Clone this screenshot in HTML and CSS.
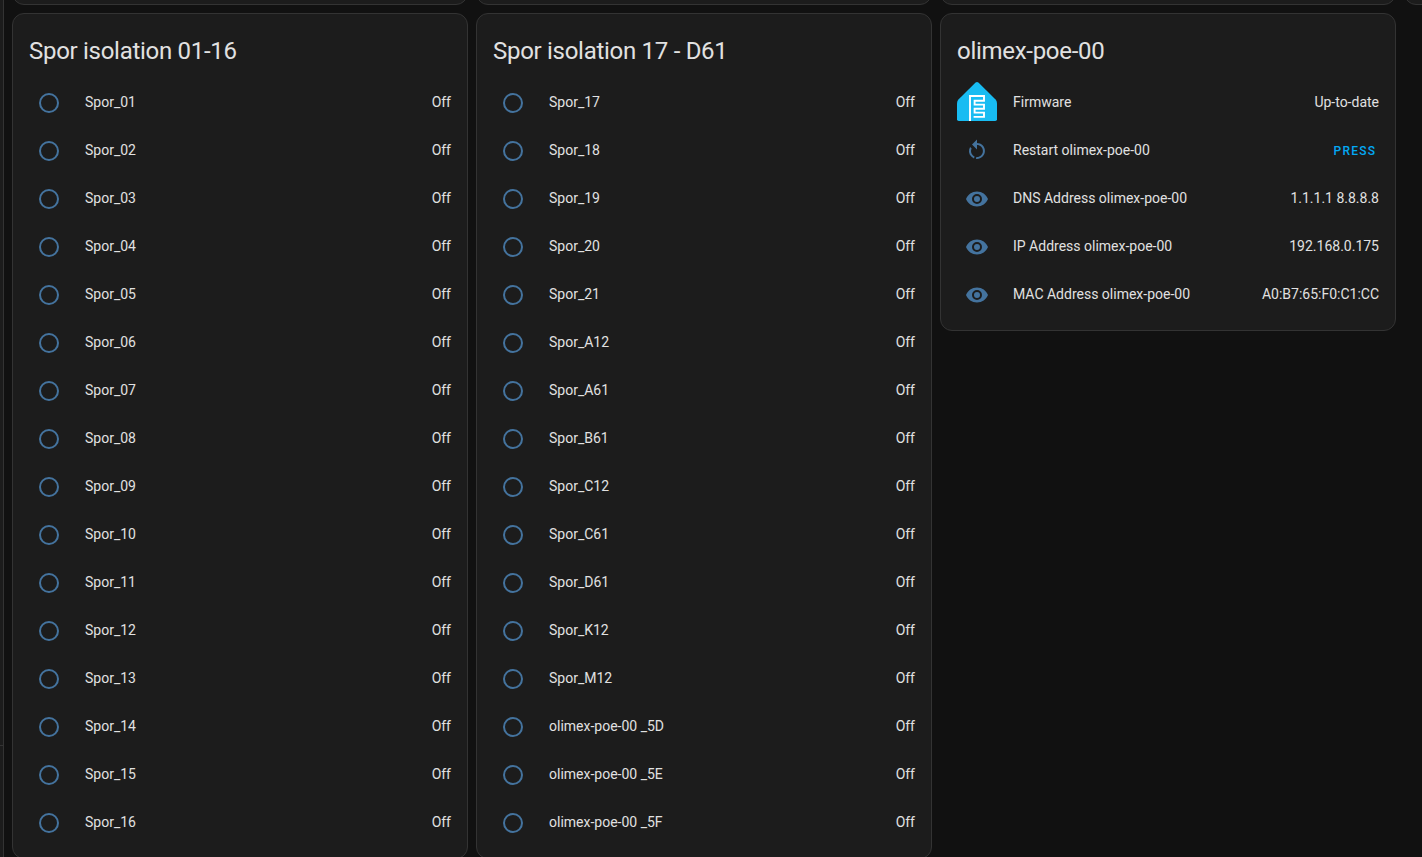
FILE: index.html
```
<!DOCTYPE html>
<html lang="en">
<head>
<meta charset="utf-8">
<title>Overview</title>
<link rel="stylesheet" href="styles.css">
</head>
<body>
<svg class="defs" aria-hidden="true">
  <symbol id="radio" viewBox="0 0 24 24"><path d="M12,20A8,8 0 0,1 4,12A8,8 0 0,1 12,4A8,8 0 0,1 20,12A8,8 0 0,1 12,20M12,2A10,10 0 0,0 2,12A10,10 0 0,0 12,22A10,10 0 0,0 22,12A10,10 0 0,0 12,2Z"/></symbol>
  <symbol id="eye" viewBox="0 0 24 24"><path d="M12,9A3,3 0 0,0 9,12A3,3 0 0,0 12,15A3,3 0 0,0 15,12A3,3 0 0,0 12,9M12,17A5,5 0 0,1 7,12A5,5 0 0,1 12,7A5,5 0 0,1 17,12A5,5 0 0,1 12,17M12,4.5C7,4.5 2.73,7.61 1,12C2.73,16.39 7,19.5 12,19.5C17,19.5 21.27,16.39 23,12C21.27,7.61 17,4.5 12,4.5Z"/></symbol>
  <symbol id="restart" viewBox="0 0 24 24"><path d="M12,4C14.1,4 16.1,4.8 17.6,6.3C20.7,9.4 20.7,14.5 17.6,17.6C15.8,19.5 13.3,20.2 10.9,19.9L11.4,17.9C13.1,18.1 14.9,17.5 16.2,16.2C18.5,13.9 18.5,10.1 16.2,7.7C15.1,6.6 13.5,6 12,6V10.6L7,5.6L12,0.6V4M6.3,17.6C3.7,15 3.3,11 5.1,7.9L6.6,9.4C5.5,11.6 5.9,14.4 7.8,16.2C8.3,16.7 8.9,17.1 9.6,17.4L9,19.4C8,19 7.1,18.4 6.3,17.6Z"/></symbol>
</svg>
<div class="app">
  <aside class="sidebar"><div class="sidebar-main"></div><div class="sidebar-foot"></div></aside>
  <main class="view">
    <div class="column">
      <section class="card card-prev"></section>
      <section class="card">
        <h1 class="title">Spor isolation 01-16</h1>
        <div class="rows" id="rows-a"></div>
      </section>
    </div>
    <div class="column">
      <section class="card card-prev"></section>
      <section class="card">
        <h1 class="title">Spor isolation 17 - D61</h1>
        <div class="rows" id="rows-b"></div>
      </section>
    </div>
    <div class="column">
      <section class="card card-prev"></section>
      <section class="card">
        <h1 class="title">olimex-poe-00</h1>
        <div class="rows">
          <div class="row">
            <span class="badge"><svg class="logo" viewBox="0 0 40 40"><path fill="#18bcf2" d="M18.6 .6Q20-.6 21.4 .6L38.3 17.3Q40 19 40 21.3V37.2Q40 39 38.2 39H1.8Q0 39 0 37.2V21.3Q0 19 1.7 17.3Z"/><path fill="none" stroke="#fff" stroke-width="1.9" d="M13 39V14H27V18.7H17.6V22.6H27V26.8H17.6V30.6H27V34.9H16.6"/></svg></span>
            <span class="name">Firmware</span><span class="state">Up-to-date</span>
          </div>
          <div class="row"><span class="badge"><svg class="icon"><use href="#restart"/></svg></span><span class="name">Restart olimex-poe-00</span><button class="press">PRESS</button></div>
          <div class="row"><span class="badge"><svg class="icon"><use href="#eye"/></svg></span><span class="name">DNS Address olimex-poe-00</span><span class="state">1.1.1.1 8.8.8.8</span></div>
          <div class="row"><span class="badge"><svg class="icon"><use href="#eye"/></svg></span><span class="name">IP Address olimex-poe-00</span><span class="state">192.168.0.175</span></div>
          <div class="row"><span class="badge"><svg class="icon"><use href="#eye"/></svg></span><span class="name">MAC Address olimex-poe-00</span><span class="state">A0:B7:65:F0:C1:CC</span></div>
        </div>
      </section>
    </div>
    <div class="column">
      <section class="card card-prev"></section>
    </div>
  </main>
</div>
<script src="app.js"></script>
</body>
</html>
```
FILE: styles.css
```
* { box-sizing: border-box; }
body {
  margin: 0;
  height: 857px;
  overflow: hidden;
  background: #111111;
  color: #e1e1e1;
  font: 14px/20px Roboto, sans-serif;
}
.defs { display: none; }
.app { display: flex; height: 857px; overflow: hidden; }
.sidebar {
  flex: none;
  display: flex;
  flex-direction: column;
  width: 4px;
  background: #1c1c1c;
  border-right: 1px solid #333333;
}
.sidebar-main { height: 745px; }
.sidebar-foot { flex: 1; border-top: 1px solid #333333; }
.view {
  flex: none;
  display: flex;
  align-items: flex-start;
  gap: 8px;
  padding-left: 8px;
}
.column {
  display: flex;
  flex-direction: column;
  flex: none;
  gap: 8px;
  width: 456px;
}
.card {
  padding: 0 16px 16px;
  background: #1c1c1c;
  border: 1px solid #333333;
  border-radius: 12px;
}
.card-prev { height: 45px; margin-top: -40px; padding: 0; }
.title {
  margin: 0;
  height: 68px;
  padding-top: 13px;
  font-size: 24px;
  font-weight: 400;
  line-height: 48px;
  letter-spacing: -0.288px;
}
.rows { display: flex; flex-direction: column; gap: 8px; }
.row { display: flex; align-items: center; height: 40px; }
.badge {
  display: flex;
  flex: none;
  align-items: center;
  justify-content: center;
  width: 40px;
  height: 40px;
  color: #44739e;
}
.icon { width: 24px; height: 24px; margin-top: 2px; fill: currentColor; }
.logo { width: 40px; height: 40px; }
.name { flex: 1; padding-left: 16px; }
.press {
  padding: 2px 0 0;
  margin-right: 2.7px;
  border: 0;
  background: none;
  color: #03a9f4;
  font: 500 12px/20px Roboto, sans-serif;
  letter-spacing: 1.25px;
}
```
FILE: app.js
```
const numbered = (from, to) =>
  Array.from({ length: to - from + 1 }, (_, i) => "Spor_" + String(from + i).padStart(2, "0"));

const lists = {
  "rows-a": numbered(1, 16),
  "rows-b": [
    ...numbered(17, 21),
    "Spor_A12", "Spor_A61", "Spor_B61", "Spor_C12", "Spor_C61", "Spor_D61", "Spor_K12", "Spor_M12",
    "olimex-poe-00 _5D", "olimex-poe-00 _5E", "olimex-poe-00 _5F",
  ],
};

for (const [id, names] of Object.entries(lists)) {
  document.getElementById(id).innerHTML = names
    .map((name) => `<div class="row"><span class="badge"><svg class="icon"><use href="#radio"/></svg></span><span class="name">${name}</span><span class="state">Off</span></div>`)
    .join("");
}
```
